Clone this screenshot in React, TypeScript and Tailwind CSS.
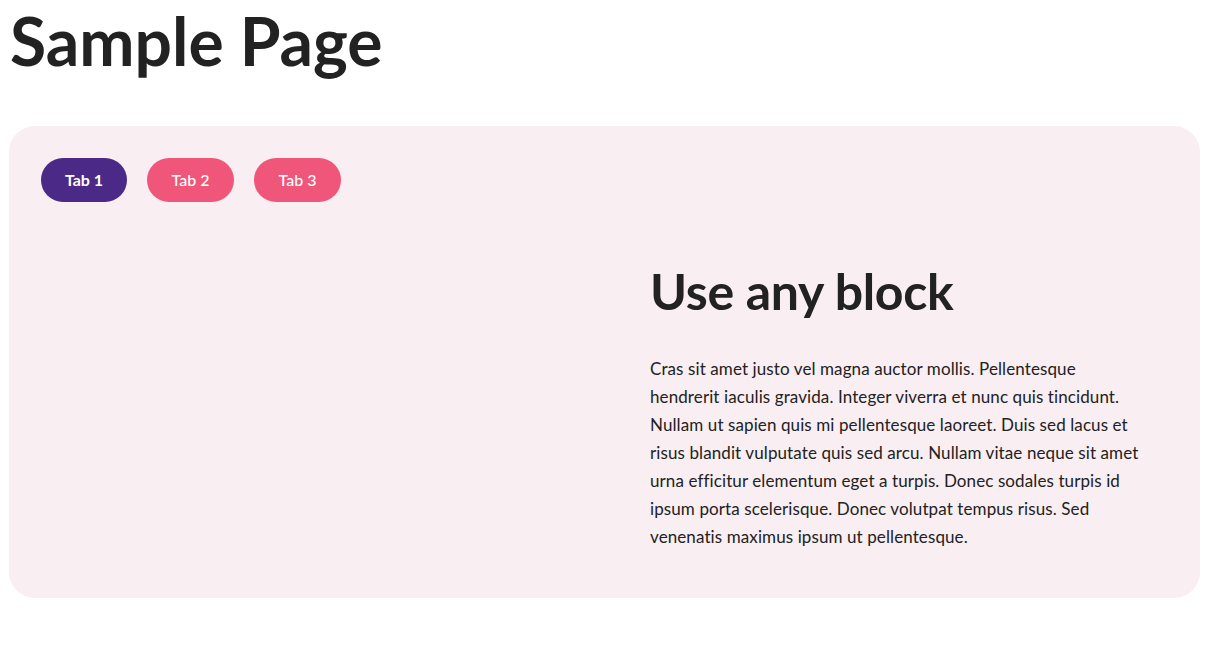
export default function App() {
  const tabs = ['Tab 1', 'Tab 2', 'Tab 3'];

  return (
    <div className="min-h-screen bg-white text-[#222222]" style={{ fontFamily: 'Lato, "Noto Sans", sans-serif' }}>
      <h1 className="px-[10px] pt-[1px] text-[66px] font-bold leading-[80px]">Sample Page</h1>

      {/* Tabs panel */}
      <section className="mx-[9px] mt-[45px] w-[1191px] rounded-[26px] bg-[#f9eef2] px-[32px] pt-[32px] pb-[47px]">
        <div className="flex gap-5">
          {tabs.map((tab, i) => (
            <button
              key={tab}
              className={
                i === 0
                  ? 'h-[44px] w-[86px] rounded-full bg-[#4a2a86] text-[16px] font-bold text-white'
                  : 'h-[44px] w-[87px] rounded-full bg-[#f0567a] text-[16px] font-medium text-white'
              }
            >
              {tab}
            </button>
          ))}
        </div>

        <div className="flex pt-[59px]">
          <div className="w-[609px] shrink-0"></div>
          <div className="w-[496px]">
            <h2 className="text-[50px] font-bold leading-[1.2] tracking-[-0.3px]">Use any block</h2>
            <p className="mt-[34px] text-[17px] leading-[28px] tracking-[0.1px] text-[#222222]">
              Cras sit amet justo vel magna auctor mollis. Pellentesque hendrerit iaculis gravida. Integer viverra et
              nunc quis tincidunt. Nullam ut sapien quis mi pellentesque laoreet. Duis sed lacus et risus blandit
              vulputate quis sed arcu. Nullam vitae neque sit amet urna efficitur elementum eget a turpis. Donec sodales
              turpis id ipsum porta scelerisque. Donec volutpat tempus risus. Sed venenatis maximus ipsum ut
              pellentesque.
            </p>
          </div>
        </div>
      </section>
    </div>
  );
}
